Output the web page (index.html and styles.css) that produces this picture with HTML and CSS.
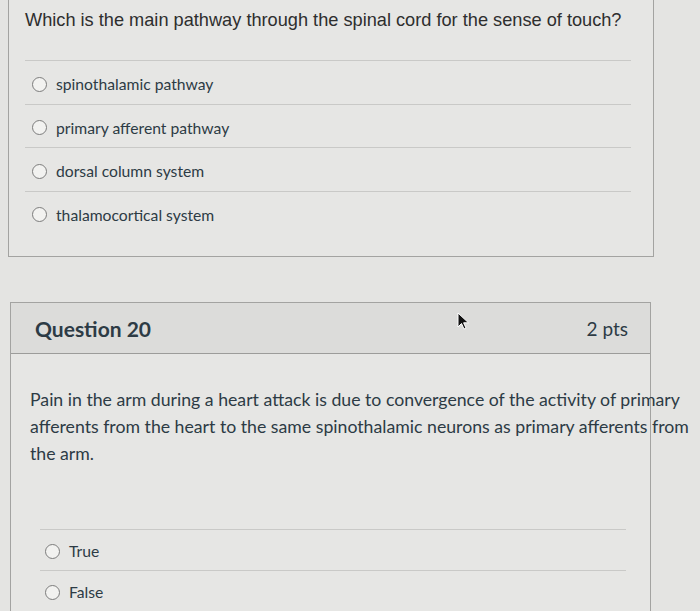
FILE: index.html
```html
<!DOCTYPE html>
<html>
<head>
<meta charset="utf-8">
<link rel="stylesheet" href="styles.css">
</head>
<body>
<div class="page">
  <section class="card card-prev">
    <p class="q-text">Which is the main pathway through the spinal cord for the sense of touch?</p>
    <ul class="answers">
      <li class="answer"><span class="radio"></span><span>spinothalamic pathway</span></li>
      <li class="answer"><span class="radio"></span><span>primary afferent pathway</span></li>
      <li class="answer"><span class="radio"></span><span>dorsal column system</span></li>
      <li class="answer"><span class="radio"></span><span>thalamocortical system</span></li>
    </ul>
  </section>

  <section class="card card-q20">
    <header class="q-header">
      <h2 class="q-title">Question 20</h2>
      <span class="q-pts">2 pts</span>
    </header>
    <div class="q-body">
      <p class="q-para">Pain in the arm during a heart attack is due to convergence of the activity of primary afferents from the heart to the same spinothalamic neurons as primary afferents from the arm.</p>
      <ul class="answers answers-tf">
        <li class="answer"><span class="radio"></span><span>True</span></li>
        <li class="answer"><span class="radio"></span><span>False</span></li>
      </ul>
    </div>
    <svg class="cursor" width="14" height="20" viewBox="0 0 14 20"><path d="M1 1 L1 15 L4.5 11.5 L7 17 L9 16 L6.6 10.8 L11.5 10.8 Z" fill="#111" stroke="#fff" stroke-width="1"/></svg>
  </section>
</div>
</body>
</html>
```

FILE: styles.css
```css
html, body {
  margin: 0;
  padding: 0;
  background: #e4e4e2;
}
.page {
  width: 700px;
  height: 611px;
  overflow: hidden;
  display: flex;
  flex-direction: column;
}
.card {
  box-sizing: border-box;
  border: 1px solid #a3a3a1;
  background: #e6e6e4;
}
.card-prev {
  margin-left: 8px;
  width: 646px;
  border-top: none;
  height: 258px;
  padding: 0 22px 0 16px;
}
.q-text {
  margin: 0;
  padding-top: 9px;
  font-family: "Liberation Sans", Arial, sans-serif;
  font-size: 18.2px;
  line-height: 22px;
  color: #2e2e2e;
  height: 60px;
  box-sizing: border-box;
  white-space: nowrap;
}
.answers {
  list-style: none;
  margin: 0;
  padding: 0;
}
.answer {
  display: flex;
  align-items: center;
  gap: 9px;
  height: 43.5px;
  box-sizing: border-box;
  border-top: 1px solid #c9c9c7;
  padding: 4px 0 0 7px;
  font-family: Lato, "Open Sans", sans-serif;
  font-size: 15.7px;
  color: #2d3b45;
}
.radio {
  width: 13px;
  height: 13px;
  border-radius: 50%;
  border: 1px solid #7c7c7c;
  background: #f2f2f0;
  flex: none;
}
.card-q20 {
  margin-top: 45px;
  margin-left: 10px;
  width: 641px;
  flex: 1;
  border-bottom: none;
  position: relative;
}
.q-header {
  height: 51px;
  box-sizing: border-box;
  display: flex;
  align-items: center;
  justify-content: space-between;
  padding: 0 22px 0 24px;
  background: #dcdcda;
  border-bottom: 1px solid #9c9c9a;
  font-family: Lato, "Open Sans", sans-serif;
  color: #2d3b45;
}
.q-title {
  margin: 0;
  font-size: 21px;
  font-weight: 700;
}
.q-pts {
  font-size: 19px;
}
.q-body {
  padding: 32px 0 0 19px;
}
.q-para {
  margin: 0;
  width: 668px;
  font-family: Lato, "Open Sans", sans-serif;
  font-size: 17.7px;
  line-height: 27px;
  color: #2d3b45;
  height: 143px;
}
.answers-tf {
  margin-left: 10px;
  width: 586px;
}
.answers-tf .answer {
  height: 41px;
  padding: 2px 0 0 5px;
}
.cursor {
  position: absolute;
  left: 446px;
  top: 9px;
}
```
